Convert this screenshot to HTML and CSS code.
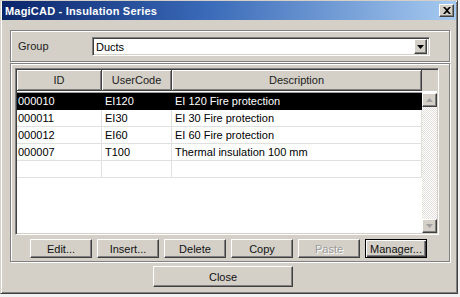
FILE: index.html
```html
<!DOCTYPE html>
<html>
<head>
<meta charset="utf-8">
<link rel="stylesheet" href="styles.css">
</head>
<body>
<div class="win">
  <div class="titlebar">
    <span class="title">MagiCAD - Insulation Series</span>
    <div class="xbtn">
      <svg width="8" height="7" viewBox="0 0 8 7"><path d="M0 0h2l2 2 2-2h2L5 3.5 8 7H6L4 5 2 7H0l3-3.5z" fill="#000"/></svg>
    </div>
  </div>
  <div class="client">
    <div class="group g1">
      <span class="glabel">Group</span>
      <div class="combo">
        <span class="ctext">Ducts</span>
        <div class="dd"><svg width="7" height="4" viewBox="0 0 7 4"><path d="M0 0h7L3.5 4z" fill="#000"/></svg></div>
      </div>
    </div>
    <div class="group g2">
      <div class="list">
        <div class="lhead">
          <div class="hc c1">ID</div>
          <div class="hc c2">UserCode</div>
          <div class="hc c3">Description</div>
          <div class="hfill"></div>
        </div>
        <div class="lbody">
          <div class="rows">
            <div class="row sel"><div class="cell c1">000010</div><div class="cell c2">EI120</div><div class="cell c3">EI 120 Fire protection</div></div>
            <div class="row"><div class="cell c1">000011</div><div class="cell c2">EI30</div><div class="cell c3">EI 30 Fire protection</div></div>
            <div class="row"><div class="cell c1">000012</div><div class="cell c2">EI60</div><div class="cell c3">EI 60 Fire protection</div></div>
            <div class="row"><div class="cell c1">000007</div><div class="cell c2">T100</div><div class="cell c3">Thermal insulation 100 mm</div></div>
            <div class="row"><div class="cell c1"></div><div class="cell c2"></div><div class="cell c3"></div></div>
          </div>
          <div class="vscroll">
            <div class="sbtn"><svg width="7" height="4" viewBox="0 0 7 4"><path d="M3.5 0L7 4H0z" fill="#a0a0a0"/></svg></div>
            <div class="track"></div>
            <div class="sbtn"><svg width="7" height="4" viewBox="0 0 7 4"><path d="M0 0h7L3.5 4z" fill="#a0a0a0"/></svg></div>
          </div>
        </div>
      </div>
      <div class="btns">
        <div class="btn">Edit...</div>
        <div class="btn">Insert...</div>
        <div class="btn">Delete</div>
        <div class="btn">Copy</div>
        <div class="btn disabled">Paste</div>
        <div class="btn default">Manager...</div>
      </div>
    </div>
    <div class="closerow"><div class="btn closebtn">Close</div></div>
  </div>
</div>
</body>
</html>
```

FILE: styles.css
```css
* { box-sizing: border-box; }
html, body { margin: 0; padding: 0; }
body {
  background: #f2f2f2;
  font-family: "Liberation Sans", Arial, sans-serif;
  font-size: 11px;
  color: #000;
}
.win {
  width: 458px;
  height: 294px;
  background: #d4d0c8;
  border: 1px solid;
  border-color: #d4d0c8 #404040 #404040 #d4d0c8;
  box-shadow: inset 1px 1px #fff, inset -1px -1px #808080;
  padding: 0 1px 1px 1px;
  display: flex;
  flex-direction: column;
}
.titlebar {
  height: 19px;
  flex: none;
  background: linear-gradient(90deg, #0a246a 0%, #3a6ab8 45%, #a6caf0 100%);
  display: flex;
  align-items: center;
  justify-content: space-between;
  padding: 0 2px 0 3px;
}
.title {
  color: #fff;
  font-weight: bold;
  font-size: 11px;
  letter-spacing: 0.2px;
}
.xbtn {
  width: 15px;
  height: 13px;
  background: #d4d0c8;
  border: 1px solid;
  border-color: #fff #404040 #404040 #fff;
  box-shadow: inset -1px -1px #808080;
  display: flex;
  align-items: center;
  justify-content: center;
}
.client {
  flex: 1;
  padding: 10px 6px 0 8px;
  display: flex;
  flex-direction: column;
}
.group {
  border: 1px solid #808080;
  box-shadow: inset 1px 1px #fff, 1px 1px #fff;
}
.g1 {
  height: 32px;
  display: flex;
  align-items: flex-start;
  padding: 6px 19px 0 7px;
}
.glabel {
  width: 74px;
  line-height: 19px;
  color: #222;
}
.combo {
  flex: 1;
  height: 19px;
  background: #fff;
  border: 1px solid;
  border-color: #808080 #fff #fff #808080;
  box-shadow: inset 1px 1px #404040, inset -1px -1px #d4d0c8;
  display: flex;
  align-items: center;
  padding: 0 2px 0 3px;
}
.ctext { flex: 1; }
.dd {
  width: 13px;
  height: 15px;
  background: #d4d0c8;
  border: 1px solid;
  border-color: #fff #404040 #404040 #fff;
  box-shadow: inset -1px -1px #808080;
  display: flex;
  align-items: center;
  justify-content: center;
}
.g2 {
  margin-top: 1px;
  height: 199px;
  padding: 4px 10px 3px 4px;
  display: flex;
  flex-direction: column;
}
.list {
  height: 167px;
  background: #fff;
  border: 1px solid;
  border-color: #808080 #fff #fff #808080;
  box-shadow: inset 1px 1px #404040, inset -1px -1px #d4d0c8;
  padding: 1px;
  display: flex;
  flex-direction: column;
}
.lhead {
  height: 21px;
  flex: none;
  display: flex;
  background: #d4d0c8;
}
.hc {
  height: 21px;
  line-height: 20px;
  text-align: center;
  color: #222;
  border-right: 1px solid #404040;
  border-bottom: 1px solid #404040;
  box-shadow: inset 1px 1px #fff, inset -1px -1px #808080;
}
.c1 { width: 85px; }
.c2 { width: 70px; }
.c3 { width: 250px; }
.hfill {
  flex: 1;
  border-bottom: 1px solid #d4d0c8;
}
.lbody {
  flex: 1;
  display: flex;
  min-height: 0;
}
.rows {
  width: 405px;
  border-top: 1px solid #a0a0a0;
  margin-top: 1px;
  background: #fff;
}
.row {
  display: flex;
  height: 17px;
  border-bottom: 1px solid #e0e0e0;
}
.cell {
  line-height: 16px;
  padding-left: 3px;
  border-right: 1px solid #e0e0e0;
  white-space: nowrap;
  overflow: hidden;
}
.cell.c1 { padding-left: 1px; }
.row.sel {
  background: #000;
  color: #fff;
  border-bottom-color: #000;
}
.row.sel .cell { border-right-color: #000; }
.vscroll {
  width: 15px;
  display: flex;
  flex-direction: column;
  margin-top: 2px;
}
.sbtn {
  height: 14px;
  flex: none;
  background: #d4d0c8;
  border: 1px solid;
  border-color: #fff #404040 #404040 #fff;
  box-shadow: inset -1px -1px #808080;
  display: flex;
  align-items: center;
  justify-content: center;
}
.track {
  flex: 1;
  background: repeating-conic-gradient(#e4e1dc 0 25%, #fff 0 50%) 0 0 / 2px 2px;
}
.btns {
  display: flex;
  gap: 5px;
  margin-top: 4px;
  padding-left: 15px;
}
.btn {
  width: 62px;
  height: 19px;
  background: #d4d0c8;
  border: 1px solid;
  border-color: #fff #404040 #404040 #fff;
  box-shadow: inset -1px -1px #808080;
  display: flex;
  align-items: center;
  justify-content: center;
  color: #111;
}
.btn.disabled {
  color: #9a9a9a;
  text-shadow: 1px 1px #fff;
}
.btn.default {
  border: 1px solid #000;
  box-shadow: inset 1px 1px #fff, inset -1px -1px #404040, inset -2px -2px #808080;
}
.closerow {
  margin-top: 4px;
  padding-left: 143px;
}
.btn.closebtn {
  width: 140px;
  height: 21px;
}
```
